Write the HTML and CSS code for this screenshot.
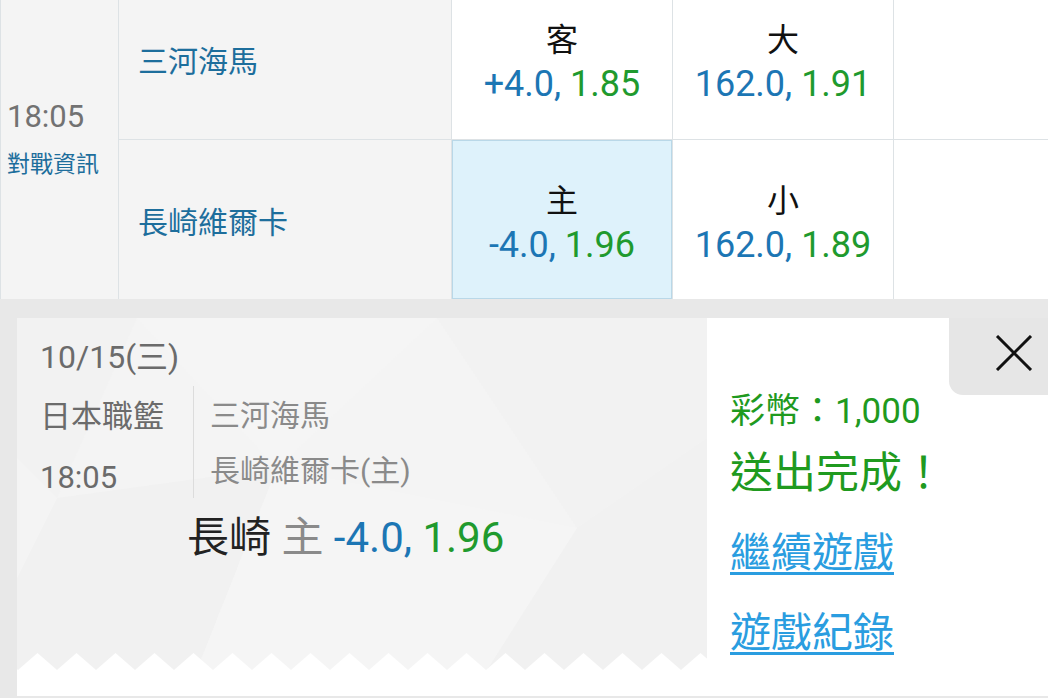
FILE: index.html
```html
<!DOCTYPE html>
<html lang="zh-Hant">
<head>
    <meta charset="UTF-8">
    <meta name="viewport" content="width=device-width, initial-scale=1.0">
    <title>投注完成</title>
    <link rel="stylesheet" href="styles.css">
</head>
<body>
    <div class="board">
        <div class="cell time-cell">
            <div class="time">18:05</div>
            <a class="info-link">對戰資訊</a>
        </div>
        <div class="cell team">三河海馬</div>
        <div class="cell odds">
            <div class="label">客</div>
            <div class="line"><span class="blue">+4.0,</span> <span class="green">1.85</span></div>
        </div>
        <div class="cell odds">
            <div class="label">大</div>
            <div class="line"><span class="blue">162.0,</span> <span class="green">1.91</span></div>
        </div>
        <div class="cell blank"></div>

        <div class="cell team">長崎維爾卡</div>
        <div class="cell odds picked">
            <div class="label">主</div>
            <div class="line"><span class="blue">-4.0,</span> <span class="green">1.96</span></div>
        </div>
        <div class="cell odds">
            <div class="label">小</div>
            <div class="line"><span class="blue">162.0,</span> <span class="green">1.89</span></div>
        </div>
        <div class="cell blank"></div>
    </div>

    <div class="ticket-area">
        <div class="ticket">
            <div class="slip">
                <div class="slip-body">
                    <svg class="slip-bg" width="690" height="352" viewBox="0 0 690 352">
                        <polygon points="0,0 120,0 40,180 0,140" fill="#f2f2f2"/>
                        <polygon points="120,0 420,0 260,150" fill="#f5f5f5"/>
                        <polygon points="420,0 690,0 690,120 560,210" fill="#f2f2f2"/>
                        <polygon points="40,180 260,150 180,352 0,352 0,260" fill="#f1f1f1"/>
                        <polygon points="260,150 560,210 470,352 180,352" fill="#f5f5f5"/>
                        <polygon points="560,210 690,120 690,352 470,352" fill="#f1f1f1"/>
                    </svg>
                    <div class="date">10/15(三)</div>
                    <div class="match">
                        <div class="league">
                            <div>日本職籃</div>
                            <div>18:05</div>
                        </div>
                        <div class="teams">
                            <div>三河海馬</div>
                            <div>長崎維爾卡(主)</div>
                        </div>
                    </div>
                    <div class="pick">長崎 <span class="side">主</span> <span class="blue">-4.0,</span> <span class="green">1.96</span></div>
                    <svg class="zigzag" width="690" height="17">
                        <defs>
                            <pattern id="zz" x="1" y="0" width="39" height="17" patternUnits="userSpaceOnUse">
                                <path d="M0 17 L19.5 0 L39 17 Z" fill="#fff"/>
                            </pattern>
                        </defs>
                        <rect width="690" height="17" fill="url(#zz)"/>
                    </svg>
                </div>
            </div>
            <div class="result">
                <div class="coins">彩幣：1,000</div>
                <div class="done">送出完成！</div>
                <a class="action" href="#">繼續遊戲</a>
                <a class="action" href="#">遊戲紀錄</a>
                <div class="close">
                    <svg width="38" height="36" viewBox="0 0 38 36">
                        <path d="M2 1 L36 35 M36 1 L2 35" stroke="#111" stroke-width="3" fill="none"/>
                    </svg>
                </div>
            </div>
        </div>
    </div>
</body>
</html>
```

FILE: styles.css
```css
body {
    margin: 0;
    background-color: #e8e8e8;
    font-family: Roboto, "Noto Sans CJK TC", sans-serif;
    overflow: hidden;
}
.board {
    display: grid;
    grid-template-columns: 117px 332px 220px 220px 1fr;
    grid-template-rows: 160px 159px;
    gap: 1px;
    padding-left: 1px;
    margin-top: -21px;
    background-color: #dde2e5;
}
.cell {
    background-color: white;
    box-sizing: border-box;
}
.time-cell {
    grid-row: span 2;
    background-color: #f4f4f4;
    display: flex;
    flex-direction: column;
    justify-content: center;
    padding-left: 6px;
}
.time {
    font-size: 31px;
    line-height: 40px;
    color: #727272;
}
.info-link {
    font-size: 23px;
    line-height: 32px;
    margin-top: 12px;
    color: #1d6e9c;
}
.team {
    background-color: #f4f4f4;
    display: flex;
    align-items: center;
    padding: 0 0 0 19px;
    font-size: 30px;
    color: #1d6e9c;
}
.odds {
    display: flex;
    flex-direction: column;
    justify-content: center;
    align-items: center;
    padding-top: 6px;
}
.odds.picked {
    background-color: #def2fb;
    box-shadow: inset 0 0 0 1px #b9d8e8;
}
.odds .label {
    font-size: 32px;
    line-height: 44px;
    color: #111;
}
.odds .line {
    font-size: 36px;
    line-height: 44px;
}
.blue {
    color: #1c76b4;
}
.green {
    color: #1f9a2e;
}
.ticket-area {
    padding: 19px 0 2px 17px;
}
.ticket {
    display: flex;
    height: 378px;
    background-color: white;
}
.slip {
    width: 690px;
}
.slip-body {
    position: relative;
    height: 352px;
    background-color: #f4f4f4;
    padding: 19px 0 0 23px;
    box-sizing: border-box;
}
.slip-bg {
    position: absolute;
    top: 0;
    left: 0;
}
.date, .match, .pick {
    position: relative;
}
.date {
    font-size: 32px;
    line-height: 40px;
    color: #6b6b6b;
}
.match {
    display: flex;
    margin-top: 9px;
}
.league {
    width: 153px;
    font-size: 31px;
    line-height: 61px;
    color: #6b6b6b;
}
.teams {
    align-self: flex-start;
    border-left: 1px solid #dcdcdc;
    padding: 2px 0 0 16px;
    font-size: 30px;
    line-height: 55px;
    color: #8a8a8a;
}
.pick {
    margin: 6px 0 0 147px;
    font-size: 42px;
    line-height: 48px;
    color: #222;
}
.pick .side {
    color: #8a8a8a;
}
.zigzag {
    position: absolute;
    left: 0;
    bottom: 0;
}
.result {
    position: relative;
    flex: 1;
    padding: 72px 0 0 23px;
}
.coins {
    font-size: 35px;
    line-height: 44px;
    color: #1f9a1f;
}
.done {
    margin-top: 11px;
    font-size: 43px;
    line-height: 56px;
    color: #1f9a1f;
}
.action {
    display: block;
    width: max-content;
    margin-top: 24px;
    font-size: 41px;
    line-height: 56px;
    color: #2a9de0;
    text-decoration-thickness: 3px;
    text-underline-offset: 5px;
}
.close {
    position: absolute;
    top: 0;
    right: 0;
    width: 99px;
    height: 77px;
    background-color: #e6e6e6;
    border-bottom-left-radius: 14px;
    display: flex;
    justify-content: center;
    align-items: flex-start;
    padding: 17px 0 0 30px;
    box-sizing: border-box;
}
```
